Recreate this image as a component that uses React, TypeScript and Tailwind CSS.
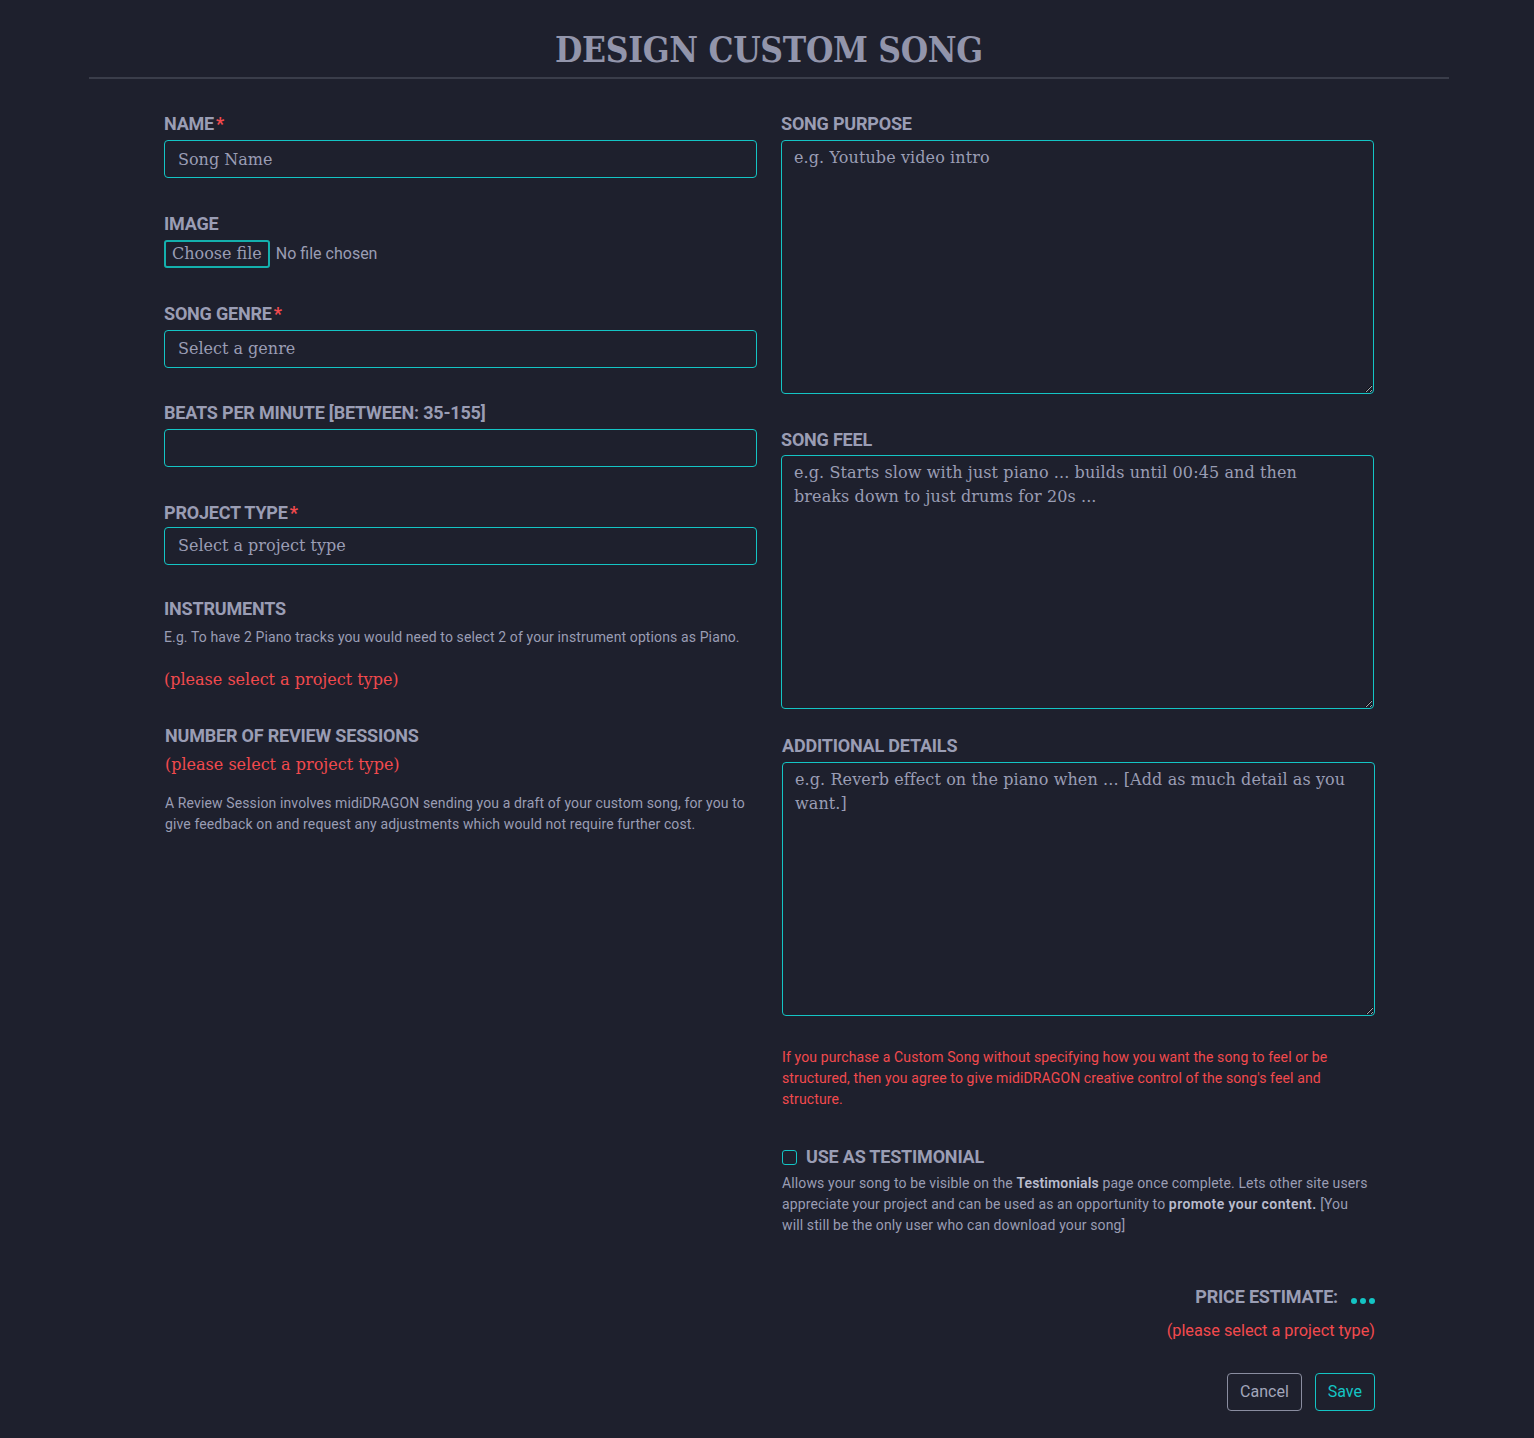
import React from "react";

const labelCls =
  "block font-['Roboto',sans-serif] font-bold text-[18px] leading-6 uppercase tracking-[-0.2px] text-[#9a9db4]";
const inputCls =
  "block h-[38px] w-full rounded-[4px] border border-[#14c4c4] bg-transparent px-[13px] font-['DejaVu_Serif',serif] text-[16px] text-[#a3a6bb] placeholder:text-[#9a9db4] outline-none";
const selectCls =
  "flex h-[38px] w-full items-center rounded-[4px] border border-[#14c4c4] bg-transparent px-[13px] font-['DejaVu_Serif',serif] text-[16px] text-[#9a9db4]";
const textareaCls =
  "block h-[254px] w-full resize-y rounded-[4px] border border-[#14c4c4] bg-transparent pl-[12px] pr-[24px] pt-[5px] font-['DejaVu_Serif',serif] text-[16px] leading-6 tracking-[0.1px] text-[#a3a6bb] placeholder:text-[#9a9db4] outline-none";
const descCls =
  "font-['Roboto',sans-serif] text-[14px] leading-[21px] tracking-[0.12px] text-[#9a9db4]";
const redSerif =
  "font-['DejaVu_Serif',serif] text-[16px] leading-6 text-[#f24a4d]";
const Star = () => <span className="ml-[2px] text-[#f24a4d]">*</span>;

export default function App() {
  return (
    <div className="min-h-[1438px] w-full bg-[#1e202d]">
      <div className="ml-[89px] w-[1360px]">
        <h1 className="pt-[30px] text-center font-['DejaVu_Serif',serif] font-stretch-condensed text-[35px] font-bold leading-[40px] tracking-[-0.3px] text-[#9295ab]">
          DESIGN CUSTOM SONG
        </h1>
        <div className="mt-[7px] h-[2px] w-full bg-[#3a3d4a]" />

        <div className="grid grid-cols-2 gap-x-[24px] px-[75px] pt-[33px]">
          {/* LEFT COLUMN */}
          <div className="flex flex-col">
            <label className={labelCls}>
              Name
              <Star />
            </label>
            <input className={`${inputCls} mt-1`} placeholder="Song Name" />

            <label className={`${labelCls} mt-[34px]`}>Image</label>
            <div className="mt-1 flex items-center">
              <span className="flex h-[28px] items-center rounded-[3px] border-2 border-[#14b0ad] px-[6px] font-['DejaVu_Serif',serif] text-[16px] text-[#9a9db4]">
                Choose file
              </span>
              <span className="ml-[6px] font-['Roboto',sans-serif] text-[16px] text-[#9a9db4]">
                No file chosen
              </span>
            </div>

            <label className={`${labelCls} mt-[34px]`}>
              Song Genre
              <Star />
            </label>
            <div className={`${selectCls} mt-1`}>Select a genre</div>

            <label className={`${labelCls} mt-[33px]`}>
              Beats per minute [between: 35-155]
            </label>
            <input className={`${inputCls} mt-[4px]`} />

            <label className={`${labelCls} mt-[34px]`}>
              Project Type
              <Star />
            </label>
            <div className={`${selectCls} mt-[2px]`}>Select a project type</div>

            <label className={`${labelCls} mt-[32px]`}>Instruments</label>
            <p className={`${descCls} mt-[6px]`}>
              E.g. To have 2 Piano tracks you would need to select 2 of your
              instrument options as Piano.
            </p>
            <p className={`${redSerif} mt-[20px]`}>(please select a project type)</p>

            <div className="pl-[1px]">
              <label className={`${labelCls} mt-[32px]`}>
                Number of review sessions
              </label>
              <p className={`${redSerif} mt-[5px]`}>(please select a project type)</p>
              <p className={`${descCls} mt-[16px]`}>
                A Review Session involves midiDRAGON sending you a draft of your
                custom song, for you to give feedback on and request any
                adjustments which would not require further cost.
              </p>
            </div>
          </div>

          {/* RIGHT COLUMN */}
          <div className="flex flex-col">
            <label className={labelCls}>Song Purpose</label>
            <textarea
              className={`${textareaCls} mt-1`}
              placeholder="e.g. Youtube video intro"
            />

            <label className={`${labelCls} mt-[34px]`}>Song Feel</label>
            <textarea
              className={`${textareaCls} mt-[3px]`}
              placeholder="e.g. Starts slow with just piano ... builds until 00:45 and then breaks down to just drums for 20s ..."
            />

            <div className="ml-[1px] -mr-[1px] flex flex-col">
              <label className={`${labelCls} mt-[25px]`}>Additional Details</label>
              <textarea
                className={`${textareaCls} mt-1`}
                placeholder="e.g. Reverb effect on the piano when ... [Add as much detail as you want.]"
              />

              <p className="mt-[31px] pr-[40px] font-['Roboto',sans-serif] text-[14px] leading-[21px] tracking-[0.12px] text-[#f24a4d]">
                If you purchase a Custom Song without specifying how you want
                the song to feel or be structured, then you agree to give
                midiDRAGON creative control of the song's feel and structure.
              </p>

              <div className="mt-[35px] flex items-center">
                <span className="h-[15px] w-[15px] rounded-[3px] border-[1.5px] border-[#14c4c4]" />
                <span className={`${labelCls} ml-[9px]`}>Use as testimonial</span>
              </div>
              <p className={`${descCls} mt-[4px] pr-[7px]`}>
                Allows your song to be visible on the{" "}
                <span className="font-semibold text-[#b9bccd]">Testimonials</span>{" "}
                page once complete. Lets other site users appreciate your project
                and can be used as an opportunity to{" "}
                <span className="font-semibold tracking-[0.4px] text-[#b9bccd]">
                  promote your content.
                </span>{" "}
                [You will still be the only user who can download your song]
              </p>

              <div className="mt-[49px] flex items-center justify-end">
                <span className={labelCls}>Price Estimate:</span>
                <span className="ml-[13px] mt-[8px] flex gap-[3px]">
                  <span className="h-[6px] w-[6px] rounded-full bg-[#14c4c4]" />
                  <span className="h-[6px] w-[6px] rounded-full bg-[#14c4c4]" />
                  <span className="h-[6px] w-[6px] rounded-full bg-[#14c4c4]" />
                </span>
              </div>
              <p className="mt-[10px] text-right font-['Roboto',sans-serif] text-[16.3px] leading-6 text-[#f24a4d]">
                (please select a project type)
              </p>

              <div className="mt-[30px] flex justify-end gap-[13px]">
                <button className="h-[38px] rounded-[4px] border border-[#8a8da0] px-3 font-['Roboto',sans-serif] text-[16px] text-[#a3a6bb]">
                  Cancel
                </button>
                <button className="h-[38px] rounded-[4px] border border-[#14c4c4] px-3 font-['Roboto',sans-serif] text-[16px] text-[#14c4c4]">
                  Save
                </button>
              </div>
            </div>
          </div>
        </div>
      </div>
    </div>
  );
}
